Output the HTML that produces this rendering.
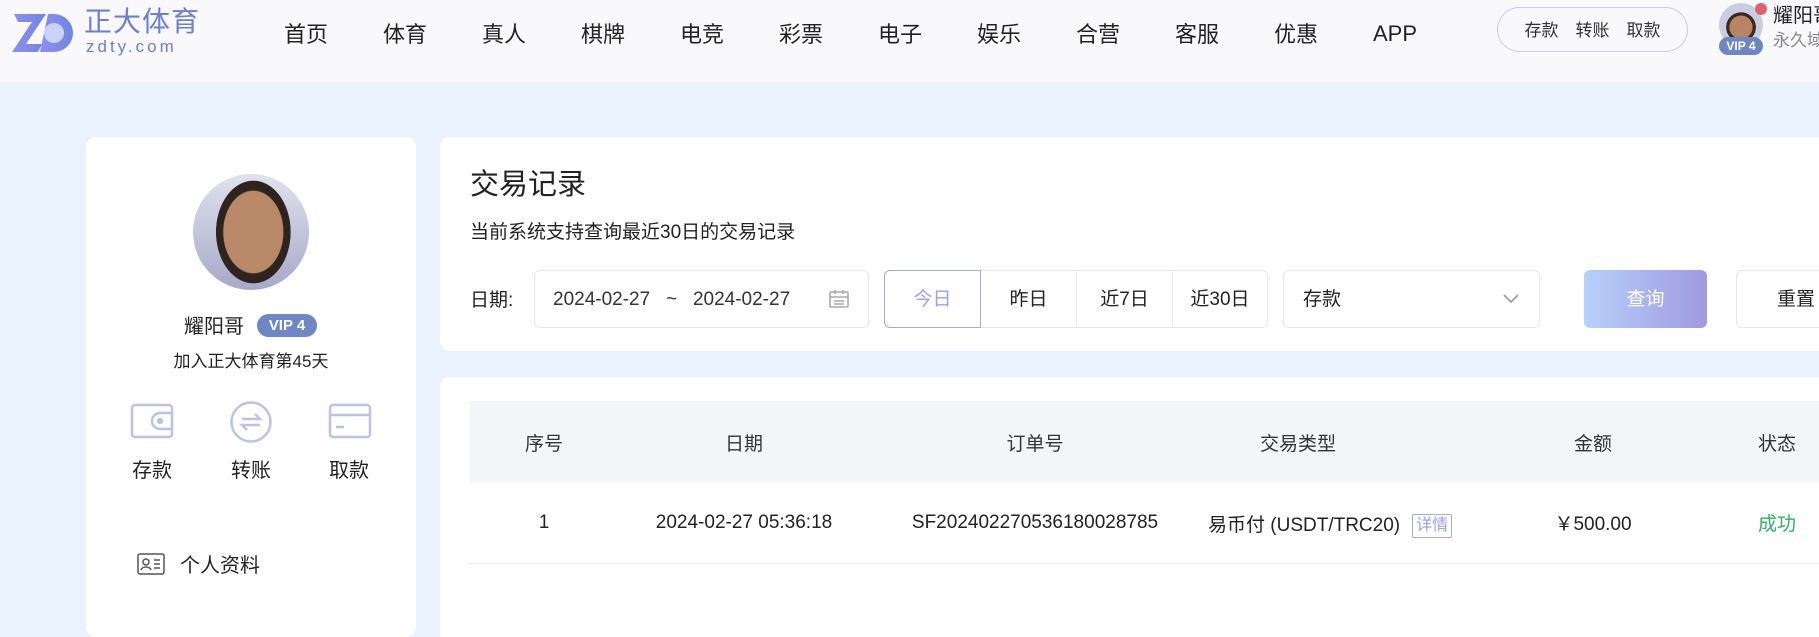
<!DOCTYPE html>
<html><head><meta charset="utf-8"><style>
*{margin:0;padding:0;box-sizing:border-box}
body{width:1819px;height:608px;overflow:hidden;background:#eaf2fd;font-family:"Liberation Sans","Noto Sans CJK SC",sans-serif;color:#222;position:relative;line-height:1.2}
.a{position:absolute;white-space:nowrap}
.hdr{left:0;top:0;width:1819px;height:82px;background:#f9f9fc}
.nav{top:22px;font-size:22px;color:#222;transform:translateX(-50%)}
.card{background:#fff;border-radius:10px}
.c{transform:translateX(-50%)}
.btn{top:270px;height:58px;border:1px solid #e6e7ec;background:#fff;font-size:19px;display:flex;align-items:center;justify-content:center;padding-top:3px}
.th{top:434px;font-size:19px;color:#333}
.td{top:514px;font-size:19px;color:#222}
</style></head><body>
<div class="a hdr"></div>
<svg class="a" style="left:12px;top:12px" width="62" height="42" viewBox="0 0 62 42"><defs><linearGradient id="g" x1="0" x2="1"><stop offset="0" stop-color="#8f8ff0"/><stop offset="1" stop-color="#6f86e0"/></linearGradient></defs><path d="M2 2h32l-20 30h16l-4 8H0l20-30H6z" fill="url(#g)"/><path d="M36 2h6a19 19 0 0 1 0 38H28z" fill="url(#g)"/><circle cx="42" cy="21" r="10" fill="#c9d2f7"/></svg>
<div class="a" style="left:84px;top:5px;font-size:28px;color:#6b7fcf;letter-spacing:1px">正大体育</div>
<div class="a" style="left:86px;top:37px;font-size:17px;color:#6b7fcf;letter-spacing:3px">zdty.com</div>
<div class="a nav" style="left:306px">首页</div><div class="a nav" style="left:405px">体育</div><div class="a nav" style="left:504px">真人</div><div class="a nav" style="left:603px">棋牌</div><div class="a nav" style="left:702px">电竞</div><div class="a nav" style="left:801px">彩票</div><div class="a nav" style="left:900px">电子</div><div class="a nav" style="left:999px">娱乐</div><div class="a nav" style="left:1098px">合营</div><div class="a nav" style="left:1197px">客服</div><div class="a nav" style="left:1296px">优惠</div><div class="a nav" style="left:1395px;top:21px">APP</div>
<div class="a" style="left:1497px;top:7px;width:191px;height:45px;border:1px solid #c7ccf0;border-radius:23px;font-size:17px;color:#333;display:flex;justify-content:space-around;align-items:center;padding:3px 18px 0">存款<span>转账</span><span>取款</span></div>
<div class="a" style="left:1719px;top:3px;width:44px;height:44px;border-radius:50%;background:radial-gradient(circle at 50% 55%,#b88560 0 35%,#3a2a22 36% 45%,#c8cde0 46%)"></div>
<div class="a" style="left:1755px;top:3px;width:12px;height:12px;border-radius:50%;background:#e0606e"></div>
<div class="a" style="left:1719px;top:37px;width:44px;height:18px;border-radius:9px;background:#6f86c4;color:#fff;font-size:12px;font-weight:bold;text-align:center;line-height:18px">VIP 4</div>
<div class="a" style="left:1773px;top:4px;font-size:20px;color:#222">耀阳哥</div>
<div class="a" style="left:1773px;top:31px;font-size:17px;color:#888">永久域</div>

<div class="a card" style="left:86px;top:137px;width:330px;height:500px"></div>
<div class="a" style="left:193px;top:174px;width:116px;height:116px;border-radius:50%;background:radial-gradient(ellipse 32% 44% at 52% 50%,#b98866 0 80%,#2e241f 82% 100%,transparent 101%),linear-gradient(#dfe2ee,#a8a8c8)"></div>
<div class="a" style="left:184px;top:315px;font-size:20px">耀阳哥</div>
<div class="a" style="left:257px;top:314px;width:60px;height:23px;border-radius:12px;background:#6f86c4;color:#fff;font-size:15px;font-weight:bold;text-align:center;line-height:23px">VIP 4</div>
<div class="a c" style="left:251px;top:352px;font-size:17px">加入正大体育第45天</div>
<svg class="a" style="left:130px;top:403px" width="44" height="36" viewBox="0 0 44 36" fill="none" stroke="#bcc3e0" stroke-width="2.5"><rect x="2" y="2" width="40" height="32" rx="3"/><path d="M42 10H30a4 4 0 0 0 0 16h12"/><circle cx="30" cy="18" r="2" fill="#bcc3e0"/></svg>
<svg class="a" style="left:229px;top:400px" width="44" height="44" viewBox="0 0 44 44" fill="none" stroke="#bcc3e0" stroke-width="2.5"><circle cx="22" cy="22" r="19.5"/><path d="M13 19h18l-5-5M31 25H13l5 5"/></svg>
<svg class="a" style="left:328px;top:403px" width="44" height="36" viewBox="0 0 44 36" fill="none" stroke="#bcc3e0" stroke-width="2.5"><rect x="2" y="2" width="40" height="32" rx="3"/><path d="M2 12h40M8 24h8" /></svg>
<div class="a c" style="left:152px;top:459px;font-size:20px">存款</div>
<div class="a c" style="left:251px;top:459px;font-size:20px">转账</div>
<div class="a c" style="left:349px;top:459px;font-size:20px">取款</div>
<svg class="a" style="left:137px;top:553px" width="28" height="22" viewBox="0 0 28 22" fill="none" stroke="#555" stroke-width="1.5"><rect x="1" y="1" width="26" height="20" rx="2"/><circle cx="9" cy="9" r="3"/><path d="M4 17c1-4 9-4 10 0M17 7h6M17 11h6M17 15h6"/></svg>
<div class="a" style="left:180px;top:554px;font-size:20px">个人资料</div>

<div class="a card" style="left:440px;top:137px;width:1400px;height:214px"></div>
<div class="a" style="left:470px;top:168px;font-size:29px;color:#222">交易记录</div>
<div class="a" style="left:470px;top:222px;font-size:19px;color:#222">当前系统支持查询最近30日的交易记录</div>
<div class="a" style="left:470px;top:290px;font-size:19px">日期:</div>
<div class="a" style="left:534px;top:270px;width:335px;height:58px;border:1px solid #e6e7ec;border-radius:6px;font-size:19px;color:#333;padding:3px 0 0 18px;display:flex;align-items:center;white-space:pre">2024-02-27   ~   2024-02-27</div>
<svg class="a" style="left:829px;top:289px" width="20" height="20" viewBox="0 0 20 20" fill="none" stroke="#aaa" stroke-width="1.6"><rect x="1" y="3" width="18" height="15" rx="1"/><path d="M1 8h18M6 1v4M14 1v4M5 12h10M5 15h10"/></svg>
<div class="a btn" style="left:884px;width:97px;border-color:#a3a6f3;color:#9a9ef0;border-radius:6px 0 0 6px;z-index:2">今日</div>
<div class="a btn" style="left:980px;width:97px">昨日</div>
<div class="a btn" style="left:1076px;width:97px">近7日</div>
<div class="a btn" style="left:1172px;width:96px;border-radius:0 6px 6px 0">近30日</div>
<div class="a btn" style="left:1283px;width:257px;border-radius:6px;justify-content:flex-start;padding-left:19px">存款</div>
<svg class="a" style="left:1502px;top:293px" width="18" height="12" viewBox="0 0 18 12" fill="none" stroke="#999" stroke-width="1.6"><path d="M2 2l7 7 7-7"/></svg>
<div class="a btn" style="left:1584px;width:123px;border:none;border-radius:6px;background:linear-gradient(90deg,#b7d0fa,#9f99e0);color:#fff">查询</div>
<div class="a btn" style="left:1736px;width:120px;border-radius:6px;justify-content:flex-start;padding-left:40px">重置</div>

<div class="a card" style="left:440px;top:377px;width:1400px;height:260px;border-radius:10px 0 0 0"></div>
<div class="a" style="left:470px;top:401px;width:1360px;height:81px;background:#f4f5f9"></div>
<div class="a" style="left:470px;top:563px;width:1360px;height:1px;background:#ececf0"></div>
<div class="a c th" style="left:544px">序号</div><div class="a c th" style="left:744px">日期</div><div class="a c th" style="left:1035px">订单号</div><div class="a c th" style="left:1298px">交易类型</div><div class="a c th" style="left:1593px">金额</div><div class="a c th" style="left:1777px">状态</div>
<div class="a c td" style="left:544px;top:512px">1</div><div class="a c td" style="left:744px;top:512px">2024-02-27 05:36:18</div><div class="a c td" style="left:1035px;top:512px">SF202402270536180028785</div>
<div class="a td" style="left:1208px;display:flex;align-items:center">易币付 (USDT/TRC20) <span style="display:inline-block;border:1px solid #a3a6f3;color:#9a9ef0;font-size:16px;padding:0 3px;margin-left:12px;border-radius:2px;line-height:22px">详情</span></div>
<div class="a c td" style="left:1593px">￥500.00</div><div class="a c td" style="left:1777px;color:#2fae6a">成功</div>
</body></html>
